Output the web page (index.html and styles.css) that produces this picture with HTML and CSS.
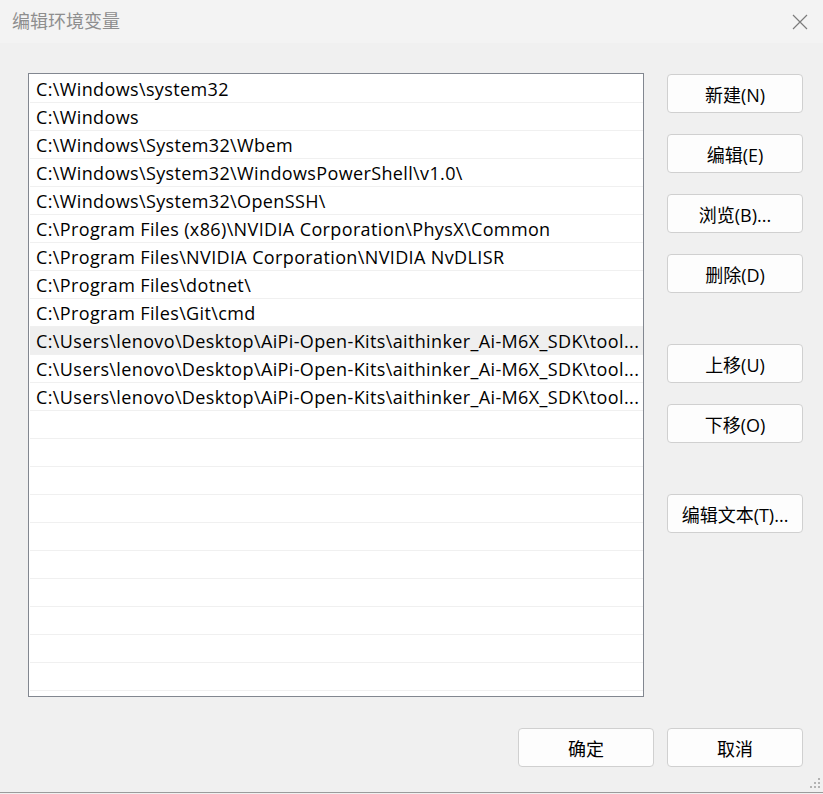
FILE: index.html
```html
<!DOCTYPE html>
<html lang="zh-CN">
<head>
<meta charset="utf-8">
<title>编辑环境变量</title>
<link rel="stylesheet" href="styles.css">
</head>
<body>
<div class="window">
  <div class="titlebar">
    <span class="title">编辑环境变量</span>
    <svg class="close" width="16" height="16" viewBox="0 0 16 16"><path d="M1 1 L15 15 M15 1 L1 15" stroke="#7b7b7b" stroke-width="1.2" fill="none"/></svg>
  </div>
  <div class="content">
    <div class="main">
      <div class="list">
        <div class="row">C:\Windows\system32</div>
        <div class="row">C:\Windows</div>
        <div class="row">C:\Windows\System32\Wbem</div>
        <div class="row">C:\Windows\System32\WindowsPowerShell\v1.0\</div>
        <div class="row">C:\Windows\System32\OpenSSH\</div>
        <div class="row">C:\Program Files (x86)\NVIDIA Corporation\PhysX\Common</div>
        <div class="row">C:\Program Files\NVIDIA Corporation\NVIDIA NvDLISR</div>
        <div class="row">C:\Program Files\dotnet\</div>
        <div class="row">C:\Program Files\Git\cmd</div>
        <div class="row selected">C:\Users\lenovo\Desktop\AiPi-Open-Kits\aithinker_Ai-M6X_SDK\tool...</div>
        <div class="row">C:\Users\lenovo\Desktop\AiPi-Open-Kits\aithinker_Ai-M6X_SDK\tool...</div>
        <div class="row">C:\Users\lenovo\Desktop\AiPi-Open-Kits\aithinker_Ai-M6X_SDK\tool...</div>
        <div class="row"></div>
        <div class="row"></div>
        <div class="row"></div>
        <div class="row"></div>
        <div class="row"></div>
        <div class="row"></div>
        <div class="row"></div>
        <div class="row"></div>
        <div class="row"></div>
        <div class="row"></div>
      </div>
      <div class="side">
        <button class="btn">新建(N)</button>
        <button class="btn">编辑(E)</button>
        <button class="btn">浏览(B)...</button>
        <button class="btn">删除(D)</button>
        <button class="btn group">上移(U)</button>
        <button class="btn">下移(O)</button>
        <button class="btn group">编辑文本(T)...</button>
      </div>
    </div>
    <div class="footer">
      <button class="btn">确定</button>
      <button class="btn">取消</button>
    </div>
  </div>
  <svg class="grip" width="12" height="12" viewBox="0 0 12 12">
    <rect x="9" y="1" width="2" height="2" fill="#b3b3b3"/>
    <rect x="5" y="5" width="2" height="2" fill="#b3b3b3"/>
    <rect x="9" y="5" width="2" height="2" fill="#b3b3b3"/>
    <rect x="1" y="9" width="2" height="2" fill="#b3b3b3"/>
    <rect x="5" y="9" width="2" height="2" fill="#b3b3b3"/>
    <rect x="9" y="9" width="2" height="2" fill="#b3b3b3"/>
  </svg>
</div>
</body>
</html>
```

FILE: styles.css
```css
* { box-sizing: border-box; }

html, body {
  margin: 0;
  padding: 0;
  background: #f0f0f0;
}

body {
  font-family: "Open Sans", "Noto Sans CJK SC", sans-serif;
  font-size: 18px;
  color: #000;
}

.window {
  position: relative;
  width: 823px;
  height: 793px;
  background: #f0f0f0;
  border-bottom: 1px solid #9b9b9b;
  display: flex;
  flex-direction: column;
}

.titlebar {
  height: 43px;
  background: #f3f3f3;
  display: flex;
  align-items: center;
  justify-content: space-between;
  padding: 0 15px 3px 12px;
}

.title {
  color: #8e8e8e;
  font-family: "Noto Sans CJK SC", sans-serif;
  font-size: 18px;
  line-height: 20px;
}

.close {
  display: block;
  margin-top: 3px;
}

.content {
  flex: 1;
  display: flex;
  flex-direction: column;
  padding: 30px 20px 0 28px;
}

.main {
  display: flex;
  gap: 23px;
}

.list {
  width: 616px;
  height: 624px;
  background: #fff;
  border: 1px solid #828790;
  padding: 1px 0 0 1px;
  overflow: hidden;
}

.row {
  height: 28px;
  border-bottom: 1px solid #f0f0f0;
  padding: 1px 3px 0 6px;
  line-height: 26px;
  letter-spacing: 0.37px;
  white-space: nowrap;
  overflow: hidden;
}

.row.selected {
  background: #efefef;
}

.side {
  display: flex;
  flex-direction: column;
  gap: 21px;
  padding-top: 1px;
}

.btn {
  width: 136px;
  height: 39px;
  background: #fdfdfd;
  border: 1px solid #d0d0d0;
  border-radius: 4px;
  font-family: "Open Sans", "Noto Sans CJK SC", sans-serif;
  font-size: 18px;
  color: #000;
  padding: 0;
  display: flex;
  align-items: center;
  justify-content: center;
}

.btn.group {
  margin-top: 30px;
}

.footer {
  display: flex;
  justify-content: flex-end;
  gap: 13px;
  margin-top: 31px;
}

.grip {
  position: absolute;
  right: 2px;
  bottom: 3px;
}
```
